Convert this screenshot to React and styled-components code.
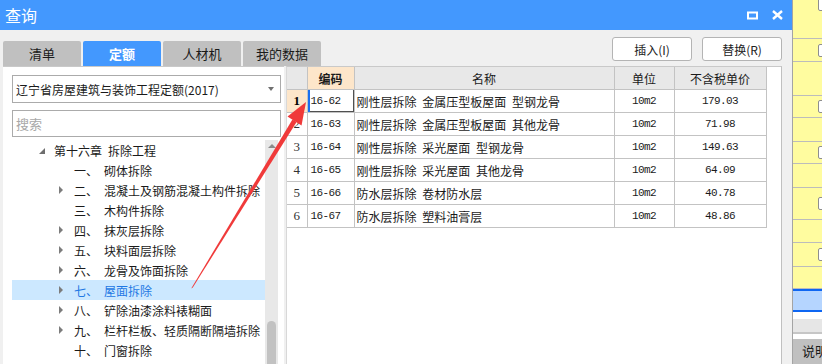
import React from 'react'
import styled, { createGlobalStyle } from 'styled-components'

const GlobalStyle = createGlobalStyle`
  html, body { margin: 0; padding: 0; }
  body {
    width: 822px;
    height: 364px;
    overflow: hidden;
    background: #f0f0f0;
    font-family: "Noto Sans CJK SC", "Liberation Sans", sans-serif;
    font-size: 12px;
    color: #1a1a1a;
  }
`

const tabs = ['清单', '定额', '人材机', '我的数据']

const tree = [
  { id: 0, level: 0, open: true, num: '第十六章', name: '拆除工程' },
  { id: 1, level: 1, num: '一、', name: '砌体拆除' },
  { id: 2, level: 1, kids: true, num: '二、', name: '混凝土及钢筋混凝土构件拆除' },
  { id: 3, level: 1, num: '三、', name: '木构件拆除' },
  { id: 4, level: 1, kids: true, num: '四、', name: '抹灰层拆除' },
  { id: 5, level: 1, kids: true, num: '五、', name: '块料面层拆除' },
  { id: 6, level: 1, kids: true, num: '六、', name: '龙骨及饰面拆除' },
  { id: 7, level: 1, kids: true, num: '七、', name: '屋面拆除', selected: true },
  { id: 8, level: 1, kids: true, num: '八、', name: '铲除油漆涂料裱糊面' },
  { id: 9, level: 1, kids: true, num: '九、', name: '栏杆栏板、轻质隔断隔墙拆除' },
  { id: 10, level: 1, num: '十、', name: '门窗拆除' },
  { id: 11, level: 1, kids: true, num: '十一、', name: '金属构件拆除' },
]

const rows = [
  { no: 1, code: '16-62', name: '刚性层拆除 金属压型板屋面 型钢龙骨', unit: '10m2', price: '179.03' },
  { no: 2, code: '16-63', name: '刚性层拆除 金属压型板屋面 其他龙骨', unit: '10m2', price: '71.98' },
  { no: 3, code: '16-64', name: '刚性层拆除 采光屋面 型钢龙骨', unit: '10m2', price: '149.63' },
  { no: 4, code: '16-65', name: '刚性层拆除 采光屋面 其他龙骨', unit: '10m2', price: '64.09' },
  { no: 5, code: '16-66', name: '防水层拆除 卷材防水层', unit: '10m2', price: '40.78' },
  { no: 6, code: '16-67', name: '防水层拆除 塑料油膏层', unit: '10m2', price: '48.86' },
]

const stripRows = [
  { h: 39, box: 'top' }, { h: 23, box: 'mid' }, { h: 34 }, { h: 22, box: 'mid' },
  { h: 24 }, { h: 22, box: 'mid' }, { h: 24 }, { h: 32, box: 'mid' },
  { h: 23 }, { h: 24, box: 'mid' }, { h: 22 },
]

const Page = styled.div`
  position: relative;
  display: flex;
  width: 822px;
  height: 364px;
  overflow: hidden;
`

const Dialog = styled.div`
  width: 792px;
  flex: none;
  display: flex;
  flex-direction: column;
  background: #f0f0f0;
`

const TitleBar = styled.div`
  height: 30px;
  flex: none;
  display: flex;
  align-items: center;
  padding-left: 5px;
  background: #4398fe;
  color: #fff;
  font-size: 16px;
`

const WinButtons = styled.div`
  margin-left: auto;
  display: flex;
  align-items: center;
  gap: 14px;
  padding-right: 9px;
  svg { display: block; }
`

const Toolbar = styled.div`
  height: 36px;
  flex: none;
  display: flex;
  padding: 0 10px 0 3px;
`

const Tabs = styled.div`
  display: flex;
  gap: 2px;
  align-self: flex-end;
`

const Tab = styled.div`
  width: 78px;
  height: 25px;
  display: flex;
  align-items: center;
  justify-content: center;
  border-radius: 2px 2px 0 0;
  font-size: 13px;
  background: ${p => (p.$active ? '#4398fe' : '#c0c0c0')};
  color: ${p => (p.$active ? '#fff' : '#1a1a1a')};
  font-weight: ${p => (p.$active ? 700 : 400)};
`

const Actions = styled.div`
  margin-left: auto;
  margin-top: 7px;
  display: flex;
  gap: 10px;
  align-self: flex-start;
`

const Button = styled.div`
  width: 78px;
  height: 22px;
  display: flex;
  align-items: center;
  justify-content: center;
  background: #fff;
  border: 1px solid #b4b4b4;
  border-radius: 3px;
  color: #222;
`

const Body = styled.div`
  flex: 1;
  min-height: 0;
  display: flex;
  gap: 2px;
  padding: 0 10px 0 3px;
`

const LeftPane = styled.div`
  width: 272px;
  display: flex;
  flex-direction: column;
  background: #fff;
  border-top: 1px solid #c9c9c9;
  padding: 8px 0 0 9px;
`

const Field = styled.div`
  width: 264px;
  height: ${p => p.$h}px;
  flex: none;
  display: flex;
  align-items: center;
  padding-left: 3px;
  border: 1px solid #ababab;
  margin-bottom: ${p => p.$mb || 0}px;
  color: ${p => (p.$hint ? '#a8a8a8' : '#1a1a1a')};
  font-size: ${p => (p.$hint ? 13 : 12)}px;
`

const DropArrow = styled.span`
  margin-left: auto;
  margin-right: 6px;
  width: 0;
  height: 0;
  border-left: 3px solid transparent;
  border-right: 3px solid transparent;
  border-top: 4px solid #707070;
`

const TreeArea = styled.div`
  flex: 1;
  min-height: 0;
  display: flex;
  margin-top: 3px;
`

const TreeList = styled.div`
  width: 253px;
  overflow: hidden;
`

const TreeRow = styled.div`
  height: 20px;
  display: flex;
  align-items: center;
  white-space: nowrap;
  padding-left: ${p => (p.$level ? 47 : 27)}px;
  background: ${p => (p.$selected ? '#cce8ff' : 'transparent')};
  color: ${p => (p.$selected ? '#1f78e4' : '#1a1a1a')};
`

const Toggle = styled.span`
  width: 15px;
  flex: none;
  display: flex;
  align-items: center;
`

const Collapsed = styled.span`
  width: 0;
  height: 0;
  border-top: 4px solid transparent;
  border-bottom: 4px solid transparent;
  border-left: 4px solid #7c7c7c;
`

const Expanded = styled.span`
  width: 0;
  height: 0;
  margin-top: 2px;
  border-left: 6px solid transparent;
  border-bottom: 6px solid #6e6e6e;
`

const Num = styled.span`
  min-width: ${p => (p.$level ? '30px' : '0')};
  margin-right: ${p => (p.$level ? 0 : 6)}px;
  flex: none;
`

const Scrollbar = styled.div`
  width: 13px;
  display: flex;
  flex-direction: column;
  align-items: center;
  background: #e8e8e8;
`

const UpArrow = styled.span`
  margin-top: 4px;
  width: 0;
  height: 0;
  border-left: 4px solid transparent;
  border-right: 4px solid transparent;
  border-bottom: 4px solid #8a8a8a;
`

const Thumb = styled.div`
  margin-top: 173px;
  width: 9px;
  flex: 1;
  border-radius: 5px 5px 0 0;
  background: #c2c2c2;
`

const RightPane = styled.div`
  flex: 1;
  background: #fff;
  border-top: 1px solid #c9c9c9;
  border-left: 1px solid #d8d8d8;
  border-right: 1px solid #c0c0c0;
`

const Table = styled.table`
  border-collapse: collapse;
  table-layout: fixed;
  width: 479px;
  td, th {
    border: 1px solid #c3c3c3;
    height: 22px;
    padding: 0;
    font-weight: 400;
    white-space: nowrap;
    overflow: hidden;
  }
  tr:first-child th { border-top: none; }
  tr > :first-child { border-left: none; }
`

const Head = styled.th`
  background: ${p => (p.$key ? '#fde6ca' : '#e8e8e8')};
  font-size: 12px;
  text-align: center;
  && { font-weight: ${p => (p.$key ? 700 : 400)}; }
`

const RowNo = styled.td`
  text-align: center;
  font-family: "Liberation Serif", serif;
  font-size: 13px;
  background: ${p => (p.$current ? '#fde6ca' : '#fff')};
  && { font-weight: ${p => (p.$current ? 700 : 400)}; }
  color: ${p => (p.$current ? '#000' : '#333')};
`

const Mono = styled.td`
  font-family: "Liberation Mono", monospace;
  font-size: 11px;
  letter-spacing: -0.6px;
  text-align: ${p => p.$align || 'left'};
  padding-left: ${p => (p.$align ? 0 : 3)}px !important;
  box-shadow: ${p => (p.$focus ? 'inset 2px 0 0 #1a6ff0, inset -1px -1px 0 #505050' : 'none')};
`

const NameCell = styled.td`
  padding-left: 2px !important;
  word-spacing: 3px;
`

const Strip = styled.div`
  flex: 1;
  min-width: 0;
  overflow: hidden;
  display: flex;
  flex-direction: column;
  border-left: 1px solid #a4a4a4;
  background: #fff;
`

const StripRow = styled.div`
  height: ${p => p.$h - 1}px;
  flex: none;
  display: flex;
  align-items: ${p => (p.$box === 'top' ? 'flex-start' : 'center')};
  padding-left: 25px;
  background: #fffc9f;
  border-bottom: 1px solid #bcbcbc;
`

const Check = styled.span`
  width: 11px;
  height: 11px;
  flex: none;
  margin-top: ${p => (p.$top ? -2 : 0)}px;
  background: #fff;
  border: 1px solid #8e8e8e;
  border-radius: 2px;
`

const CurrentRow = styled.div`
  height: 19px;
  flex: none;
  background: #b5d5ff;
  border-top: 2px solid #0e66f2;
  border-bottom: 2px solid #0e66f2;
`

const Band = styled.div`
  height: 13px;
  flex: none;
  margin-top: 7px;
  background: #e6e6e6;
  border-bottom: 2px solid #c6c6c6;
`

const NoteTab = styled.div`
  flex: 1;
  margin-top: 5px;
  padding: 2px 0 0 9px;
  background: #c0c0c0;
  font-size: 13px;
  white-space: nowrap;
`

const ArrowLayer = styled.svg`
  position: absolute;
  left: 0;
  top: 0;
  pointer-events: none;
`

function App() {
  return (
    <Page>
      <GlobalStyle />
      <Dialog>
        <TitleBar>
          查询
          <WinButtons>
            <svg width="11" height="9" viewBox="0 0 11 9">
              <rect x="1" y="1.5" width="9" height="6" fill="none" stroke="#fff" strokeWidth="2" />
            </svg>
            <svg width="11" height="10" viewBox="0 0 11 10">
              <path d="M1 1 L10 9 M10 1 L1 9" stroke="#fff" strokeWidth="2.4" />
            </svg>
          </WinButtons>
        </TitleBar>
        <Toolbar>
          <Tabs>
            {tabs.map(t => (
              <Tab key={t} $active={t === '定额'}>{t}</Tab>
            ))}
          </Tabs>
          <Actions>
            <Button>插入(I)</Button>
            <Button>替换(R)</Button>
          </Actions>
        </Toolbar>
        <Body>
          <LeftPane>
            <Field $h={26} $mb={7}>
              辽宁省房屋建筑与装饰工程定额(2017)
              <DropArrow />
            </Field>
            <Field $h={25} $hint>搜索</Field>
            <TreeArea>
              <TreeList>
                {tree.map(n => (
                  <TreeRow key={n.id} $level={n.level} $selected={n.selected}>
                    <Toggle>
                      {n.open ? <Expanded /> : n.kids ? <Collapsed /> : null}
                    </Toggle>
                    <Num $level={n.level}>{n.num}</Num>
                    {n.name}
                  </TreeRow>
                ))}
              </TreeList>
              <Scrollbar>
                <UpArrow />
                <Thumb />
              </Scrollbar>
            </TreeArea>
          </LeftPane>
          <RightPane>
            <Table>
              <colgroup>
                <col style={{ width: 20 }} />
                <col style={{ width: 47 }} />
                <col style={{ width: 260 }} />
                <col style={{ width: 60 }} />
                <col style={{ width: 92 }} />
              </colgroup>
              <thead>
                <tr>
                  <Head />
                  <Head $key>编码</Head>
                  <Head>名称</Head>
                  <Head>单位</Head>
                  <Head>不含税单价</Head>
                </tr>
              </thead>
              <tbody>
                {rows.map(r => (
                  <tr key={r.no}>
                    <RowNo $current={r.no === 1}>{r.no}</RowNo>
                    <Mono $focus={r.no === 1}>{r.code}</Mono>
                    <NameCell>{r.name}</NameCell>
                    <Mono $align="center">{r.unit}</Mono>
                    <Mono $align="center">{r.price}</Mono>
                  </tr>
                ))}
              </tbody>
            </Table>
          </RightPane>
        </Body>
      </Dialog>
      <Strip>
        {stripRows.map((s, i) => (
          <StripRow key={i} $h={s.h} $box={s.box}>
            {s.box && <Check $top={s.box === 'top'} />}
          </StripRow>
        ))}
        <CurrentRow />
        <Band />
        <NoteTab>说明</NoteTab>
      </Strip>
      <ArrowLayer width="822" height="364" viewBox="0 0 822 364">
        <polygon
          points="191.2,288.5 192.8,287.5 296.6,122.1 292.4,119.5"
          fill="#f03a3a"
        />
        <polygon points="306,102 301.5,125.5 287.5,116.5" fill="#f03a3a" />
      </ArrowLayer>
    </Page>
  )
}

export default App
